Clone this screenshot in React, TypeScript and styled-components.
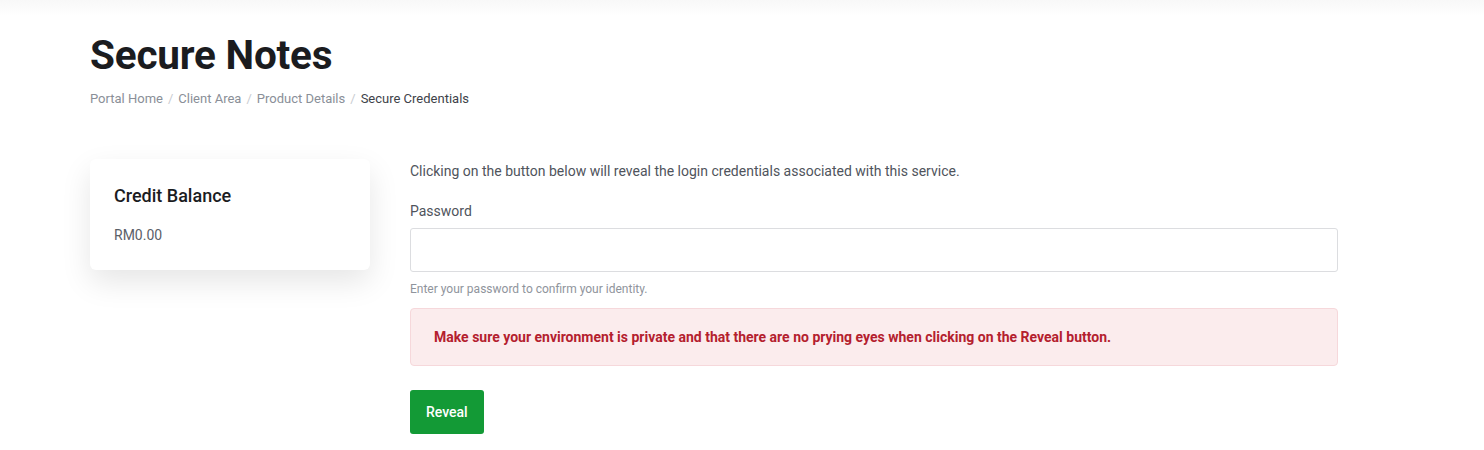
import { createGlobalStyle } from "styled-components";
import styled from "styled-components";

const GlobalStyle = createGlobalStyle`
    * {
        box-sizing: border-box;
    }
    body {
        margin: 0;
        background: #ffffff;
        font-family: Roboto, "Liberation Sans", sans-serif;
        color: #1e2024;
    }
`;

const TopShade = styled.div`
    height: 16px;
    background: linear-gradient(to bottom, #f8f8f8, #ffffff);
`;

const Container = styled.div`
    width: 1304px;
    margin: 0 auto;
    padding-bottom: 16px;
`;

const PageHeader = styled.div`
    padding-top: 17px;
    h1 {
        margin: 0;
        font-size: 40.5px;
        font-weight: 700;
        line-height: 44px;
        color: #1b1c1f;
        letter-spacing: -0.2px;
    }
`;

const Breadcrumb = styled.ol`
    list-style: none;
    display: flex;
    margin: 14px 0 0 0;
    padding: 0;
    font-size: 13px;
    line-height: 16px;
    li + li::before {
        content: "/";
        color: #c9ccd1;
        padding: 0 5px;
    }
`;

const Crumb = styled.li<{ $active?: boolean }>`
    color: ${(p) => (p.$active ? "#3e4249" : "#8a8f98")};
`;

const Layout = styled.div`
    display: grid;
    grid-template-columns: 280px 928px;
    column-gap: 40px;
    margin-top: 52px;
    align-items: start;
`;

const SideCard = styled.div`
    background: #ffffff;
    border-radius: 6px;
    box-shadow: 0 12px 30px rgba(0, 0, 0, 0.1);
    padding: 26px 24px 26px;
    h3 {
        margin: 0;
        font-size: 18px;
        font-weight: 500;
        line-height: 22px;
        color: #1b1c1f;
    }
    p {
        margin: 19px 0 0 0;
        font-size: 14px;
        line-height: 18px;
        color: #5b6068;
    }
`;

const Main = styled.div`
    padding-top: 3px;
`;

const Intro = styled.p`
    margin: 0;
    font-size: 14px;
    line-height: 18px;
    color: #4f545c;
`;

const Label = styled.label`
    display: block;
    margin-top: 22px;
    font-size: 14px;
    line-height: 18px;
    color: #4f545c;
`;

const Input = styled.input`
    display: block;
    width: 100%;
    height: 44px;
    margin-top: 8px;
    border: 1px solid #dcdde0;
    border-radius: 3px;
    padding: 0 12px;
    font-size: 14px;
    font-family: inherit;
    outline: none;
`;

const Help = styled.small`
    display: block;
    margin-top: 10px;
    font-size: 12px;
    line-height: 15px;
    color: #8f949c;
`;

const Alert = styled.div`
    margin-top: 11px;
    background: #fbeced;
    border: 1px solid #f6d8db;
    border-radius: 4px;
    padding: 19px 23px;
    font-size: 14px;
    font-weight: 700;
    line-height: 18px;
    color: #b4202e;
`;

const RevealButton = styled.button`
    margin-top: 24px;
    height: 44px;
    padding: 0 16px;
    border: none;
    border-radius: 3px;
    background: #139a36;
    color: #ffffff;
    font-family: inherit;
    font-size: 14px;
    font-weight: 500;
    cursor: pointer;
`;

const App = () => {
    return (
        <>
            <GlobalStyle />
            <TopShade />
            <Container>
                <PageHeader>
                    <h1>Secure Notes</h1>
                    <Breadcrumb>
                        <Crumb>Portal Home</Crumb>
                        <Crumb>Client Area</Crumb>
                        <Crumb>Product Details</Crumb>
                        <Crumb $active>Secure Credentials</Crumb>
                    </Breadcrumb>
                </PageHeader>
                <Layout>
                    <SideCard>
                        <h3>Credit Balance</h3>
                        <p>RM0.00</p>
                    </SideCard>
                    <Main>
                        <Intro>
                            Clicking on the button below will reveal the login
                            credentials associated with this service.
                        </Intro>
                        <Label htmlFor="pw">Password</Label>
                        <Input id="pw" type="password" />
                        <Help>Enter your password to confirm your identity.</Help>
                        <Alert>
                            Make sure your environment is private and that there
                            are no prying eyes when clicking on the Reveal button.
                        </Alert>
                        <RevealButton>Reveal</RevealButton>
                    </Main>
                </Layout>
            </Container>
        </>
    );
};

export default App;
